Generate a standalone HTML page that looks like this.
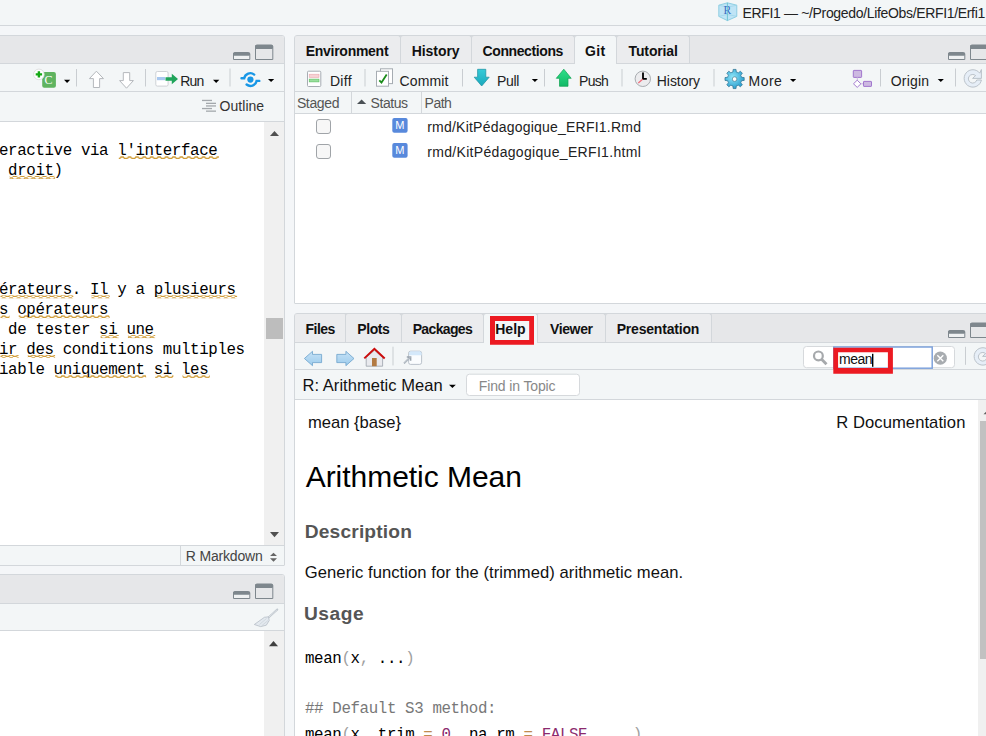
<!DOCTYPE html>
<html><head><meta charset="utf-8">
<style>
*{box-sizing:border-box}
html,body{margin:0;padding:0}
body{width:986px;height:736px;overflow:hidden;position:relative;background:#f4f6f8;font-family:'Liberation Sans',sans-serif}
.a{position:absolute}
.t{position:absolute;white-space:pre;line-height:1}
.bg-title{background:#f3f6f7}
.hdr{background:#e6e7e9}
.tb{background:#f3f6f7}
.ln{background:#d3d7db}
.tab{position:absolute;top:0;height:28px;background:#ebecee;border:1px solid #d3d7db;border-bottom:none;border-radius:3px 3px 0 0}
.tab.act{background:#f3f6f7}
.sep{position:absolute;width:1px;background:#c8ccd0}
.sbtn{position:absolute;width:20px;height:20px;background:#f0f0f0}
svg{position:absolute;overflow:visible}
</style></head><body>
<!-- title bar -->
<div class="a bg-title" style="left:0;top:0;width:986px;height:25px"></div>
<div class="a ln" style="left:0;top:25px;width:986px;height:1px"></div>

<!-- ============ LEFT SOURCE PANE ============ -->
<div class="a" style="left:-10px;top:35px;width:295px;height:531px;border:1px solid #d3d7db;border-radius:3px 3px 1px 1px;background:#fff;overflow:hidden">
  <div class="a hdr" style="left:0;top:0;width:293px;height:27px"></div>
  <div class="a ln" style="left:0;top:27px;width:293px;height:1px"></div>
  <div class="a tb" style="left:0;top:28px;width:293px;height:27px"></div>
  <div class="a ln" style="left:0;top:55px;width:293px;height:1px"></div>
  <div class="a tb" style="left:0;top:56px;width:293px;height:29px"></div>
  <div class="a ln" style="left:0;top:85px;width:293px;height:1px"></div>
  <!-- editor scrollbar -->
  <div class="a" style="left:273px;top:86px;width:20px;height:423px;background:#f0f0f0"></div>
  <div class="a" style="left:275px;top:282px;width:17px;height:21px;background:#bdbdbd"></div>
  <div class="a ln" style="left:0;top:509px;width:293px;height:1px"></div>
  <div class="a tb" style="left:0;top:510px;width:293px;height:19px"></div>
  <div class="a ln" style="left:189px;top:510px;width:1px;height:19px"></div>
</div>

<!-- ============ LEFT CONSOLE PANE ============ -->
<div class="a" style="left:-10px;top:574px;width:295px;height:180px;border:1px solid #d3d7db;border-radius:3px;background:#fff;overflow:hidden">
  <div class="a hdr" style="left:0;top:0;width:293px;height:28px"></div>
  <div class="a ln" style="left:0;top:28px;width:293px;height:1px"></div>
  <div class="a tb" style="left:0;top:29px;width:293px;height:26px"></div>
  <div class="a ln" style="left:0;top:55px;width:293px;height:1px"></div>
  <div class="a" style="left:273px;top:56px;width:20px;height:130px;background:#f0f0f0"></div>
</div>

<!-- ============ RIGHT GIT PANE ============ -->
<div class="a" style="left:294px;top:35px;width:702px;height:269px;border:1px solid #d3d7db;border-radius:3px 3px 1px 1px;background:#fff;overflow:hidden">
  <div class="a hdr" style="left:0;top:0;width:700px;height:27px"></div>
  <div class="tab" style="left:-1px;top:-1px;height:29px;width:107px"></div>
  <div class="tab" style="left:105px;top:-1px;height:29px;width:72px"></div>
  <div class="tab" style="left:176px;top:-1px;height:29px;width:104px"></div>
  <div class="tab" style="left:321px;top:-1px;height:29px;width:74px"></div>
  <div class="a ln" style="left:0;top:27px;width:700px;height:1px"></div>
  <div class="tab act" style="left:279px;top:-1px;height:29px;width:43px"></div>
  <div class="a tb" style="left:0;top:28px;width:700px;height:27px"></div>
  <div class="a ln" style="left:0;top:55px;width:700px;height:1px"></div>
  <div class="a tb" style="left:0;top:56px;width:700px;height:21px"></div>
  <div class="a ln" style="left:56px;top:56px;width:1px;height:21px"></div>
  <div class="a ln" style="left:126px;top:56px;width:1px;height:21px"></div>
  <div class="a ln" style="left:0;top:77px;width:700px;height:1px"></div>
</div>

<!-- ============ RIGHT HELP PANE ============ -->
<div class="a" style="left:294px;top:313px;width:702px;height:433px;border:1px solid #d3d7db;border-radius:3px;background:#fff;overflow:hidden">
  <div class="a hdr" style="left:0;top:0;width:700px;height:28px"></div>
  <div class="tab" style="left:-1px;top:-1px;height:29px;width:53px"></div>
  <div class="tab" style="left:50px;top:-1px;height:29px;width:57px"></div>
  <div class="tab" style="left:106px;top:-1px;height:29px;width:83px"></div>
  <div class="tab" style="left:241px;top:-1px;height:29px;width:70px"></div>
  <div class="tab" style="left:310px;top:-1px;height:29px;width:107px"></div>
  <div class="a ln" style="left:0;top:28px;width:700px;height:1px"></div>
  <div class="tab act" style="left:188px;top:-1px;height:30px;width:55px"></div>
  <div class="a tb" style="left:0;top:29px;width:700px;height:26px"></div>
  <div class="a ln" style="left:0;top:55px;width:700px;height:1px"></div>
  <div class="a tb" style="left:0;top:56px;width:700px;height:29px"></div>
  <div class="a ln" style="left:0;top:85px;width:700px;height:1px"></div>
  <div class="a" style="left:683px;top:86px;width:20px;height:350px;background:#f0f0f0"></div>
  <div class="a" style="left:685px;top:107px;width:20px;height:238px;background:#c1c1c1"></div>
</div>

<!-- ============ ICON OVERLAY ============ -->
<svg width="986" height="736" viewBox="0 0 986 736" style="left:0;top:0">
<defs>
 <linearGradient id="gBlueArr" x1="0" y1="0" x2="0" y2="1"><stop offset="0" stop-color="#c6e2f6"/><stop offset="1" stop-color="#9ccbec"/></linearGradient>
 <radialGradient id="gGear" cx="0.4" cy="0.4" r="0.7"><stop offset="0" stop-color="#8fe6f8"/><stop offset="1" stop-color="#1e94c8"/></radialGradient>
 <linearGradient id="gPull" x1="0" y1="0" x2="0" y2="1"><stop offset="0" stop-color="#34cbd8"/><stop offset="1" stop-color="#1aa8bc"/></linearGradient>
 <linearGradient id="gPush" x1="0" y1="0" x2="0" y2="1"><stop offset="0" stop-color="#2ee08a"/><stop offset="1" stop-color="#12b866"/></linearGradient>
 <pattern id="wavy" x="0" y="0" width="7.4" height="3" patternUnits="userSpaceOnUse">
   <path d="M-1,2.3 L1.6,2.3 L2.7,1.0 L4.9,1.0 L6.0,2.3 L8.4,2.3" fill="none" stroke="#cf9c38" stroke-width="1.3"/>
 </pattern>
</defs>

<!-- title R cube -->
<g>
 <path d="M718.8,5.2 L727.4,2.8 L736.8,5.2 V16.4 L727.4,20.6 L718.8,16.4 Z" fill="#bfe4f6" stroke="#86cbe0" stroke-width="0.9"/>
 <path d="M718.8,5.2 L727.4,7.2 L736.8,5.2 M718.8,16.4 L727.4,14.4 L736.8,16.4" fill="none" stroke="#9ad4e6" stroke-width="0.7"/>
 <text x="723.4" y="13.6" font-family="Liberation Serif" font-size="11.5" fill="#3a6cc2">R</text>
 <path d="M727.4,2.8 V20.6" stroke="#5dbccc" stroke-width="0.8"/>
</g>
<!-- ===== pane min/max icons ===== -->
<g id="minmaxL" fill="none">
 <path d="M233,60 V54 a1.5,1.5 0 0 1 1.5,-1.5 H248.3 a1.5,1.5 0 0 1 1.5,1.5 V60 Z" fill="#eff1f2" />
 <path d="M233.5,59.5 V54 a1.5,1.5 0 0 1 1.5,-1.5 H248.3 a1.5,1.5 0 0 1 1.5,1.5 V59.5 Z" stroke="#7e878d" stroke-width="1"/>
 <rect x="233" y="52.5" width="17" height="3.3" rx="1.2" fill="#7e878d"/>
 <path d="M255.5,59.5 V46.5 a1.5,1.5 0 0 1 1.5,-1.5 H271.3 a1.5,1.5 0 0 1 1.5,1.5 V59.5 Z" stroke="#7e878d" stroke-width="1"/>
 <rect x="255" y="45" width="18" height="4" rx="1.2" fill="#7e878d"/>
</g>
<use href="#minmaxL" transform="translate(0,539)"/>
<use href="#minmaxL" transform="translate(715,0)"/>
<use href="#minmaxL" transform="translate(715,278)"/>

<!-- ===== left editor toolbar ===== -->
<g>
 <rect x="42.2" y="72.1" width="13.7" height="15.7" rx="2" fill="#5fb35f"/>
 <text x="44.6" y="84.2" font-family="Liberation Serif" font-size="12" fill="#fff">C</text>
 <circle cx="38.9" cy="74.4" r="5.3" fill="#fff" stroke="#d8d8d8" stroke-width="0.8"/>
 <path d="M38.9,71.2 V77.6 M35.7,74.4 H42.1" stroke="#14a814" stroke-width="2.4"/>
 <path transform="translate(0,0.8)" d="M64,79 H70.2 L67.1,82.2 Z" fill="#000"/>
 <rect x="76" y="69" width="1" height="17.5" fill="#c9cdd1"/>
 <path d="M96.4,71.2 L103.5,78.6 H99.6 V87.5 H93.4 V78.6 H89.4 Z" fill="#fff" stroke="#b4b8bc" stroke-width="1"/>
 <path d="M123.3,72.6 H129.7 V80.6 H133.4 L126.5,88.2 L119.6,80.6 H123.3 Z" fill="#fff" stroke="#b4b8bc" stroke-width="1"/>
 <rect x="145" y="69" width="1" height="17.5" fill="#c9cdd1"/>
 <rect x="155.8" y="71.5" width="12.3" height="14.6" rx="1.5" fill="#fff" stroke="#c9cdd1" stroke-width="0.9"/>
 <rect x="157" y="77" width="8" height="3.2" fill="#a8c8f0"/>
 <path d="M165.5,77.3 H171.8 V73.8 L178,79 L171.8,84.2 V80.7 H165.5 Z" fill="#1fa45a"/>
 <path transform="translate(0,0.8)" d="M213,79 H219.3 L216.2,82.1 Z" fill="#000"/>
 <rect x="229.5" y="68.5" width="1" height="18" fill="#c9cdd1"/>
 <g fill="none" stroke="#1897e6" stroke-width="2.4" stroke-linecap="round">
  <path d="M241.5,78.2 H244.2 A6.2,6.2 0 0 1 254.2,74.6"/>
  <path d="M259.3,80.9 H256.6 A6.2,6.2 0 0 1 246.6,84.5"/>
 </g>
 <circle cx="250.4" cy="79.6" r="3.1" fill="#1897e6"/>
 <path transform="translate(0,0.8)" d="M268,78.2 H274.2 L271.1,81.3 Z" fill="#000"/>
</g>
<!-- outline icon -->
<g fill="#a4a8ac">
 <rect x="202" y="99.8" width="10" height="1.3"/>
 <rect x="206" y="102.7" width="10" height="1.3"/>
 <rect x="206" y="105.3" width="10" height="1.3"/>
 <rect x="202" y="107.9" width="10" height="1.3"/>
 <rect x="206" y="110.5" width="10" height="1.3"/>
</g>
<!-- editor scroll arrows -->
<path d="M270,136 L274.5,131 L279,136 Z" fill="#505050"/>
<path d="M270,532 H279 L274.5,537.3 Z" fill="#505050"/>
<!-- status bar up/down -->
<path d="M270,556 L273.5,552.8 L277,556 Z M270,558.3 H277 L273.5,561.7 Z" fill="#666"/>
<!-- console broom -->
<g>
 <path d="M277.3,609.5 L268.4,617.6" stroke="#b9c1c9" stroke-width="1.9" stroke-linecap="round"/>
 <path d="M277.3,609.5 L268.4,617.6" stroke="#eef1f4" stroke-width="0.7"/>
 <path d="M264.4,617.3 L268.5,616.8 L269.2,620.5 L266.3,625.2 L260.6,626.6 L254.3,624.5 Z" fill="#e3e9ef" stroke="#b6bec6" stroke-width="0.8"/>
 <path d="M266.5,618.5 L259.5,624.5 M268,620.5 L262,625.5" stroke="#c4ccd4" stroke-width="0.6"/>
</g>
<path d="M269,646.3 L273.5,641 L278,646.3 Z" fill="#404040"/>

<!-- ===== git toolbar ===== -->
<g>
 <rect x="307.5" y="71.2" width="13.3" height="15.3" rx="1" fill="#fff" stroke="#a6acb2" stroke-width="1"/>
 <rect x="309.2" y="74.2" width="9.8" height="3.2" fill="#f6d2d5" stroke="#eaa8ae" stroke-width="0.6"/>
 <rect x="309.2" y="79.1" width="9.8" height="2.8" fill="#9adf9e" stroke="#58bf5e" stroke-width="0.6"/>
 <rect x="364.5" y="69" width="1" height="17.5" fill="#c9cdd1"/>
 <rect x="380.5" y="68.8" width="12" height="14.8" fill="#fff" stroke="#a6acb2" stroke-width="1"/>
 <rect x="376.5" y="71.3" width="12" height="14.9" fill="#fff" stroke="#a6acb2" stroke-width="1"/>
 <path d="M379.3,80.3 L381.5,82.6 L386.7,74.5" fill="none" stroke="#1b8c1b" stroke-width="1.8"/>
 <rect x="462" y="69" width="1" height="17.5" fill="#c9cdd1"/>
 <path d="M477.6,69.3 H485.8 V77.2 H489.2 L481.7,86 L474.2,77.2 H477.6 Z" fill="url(#gPull)" stroke="#1b8fa0" stroke-width="0.7"/>
 <path transform="translate(0,0.8)" d="M531.8,78.3 H538 L534.9,81.3 Z" fill="#000"/>
 <rect x="544" y="69" width="1" height="17.5" fill="#c9cdd1"/>
 <path d="M563.8,69.2 L571.2,78.3 H568 V86.3 H559.5 V78.3 H556.3 Z" fill="url(#gPush)" stroke="#0fa050" stroke-width="0.7"/>
 <rect x="621.5" y="69" width="1" height="17.5" fill="#c9cdd1"/>
 <circle cx="642.8" cy="78.8" r="7.7" fill="#ececee" stroke="#a8acb0" stroke-width="1"/>
 <path d="M643,72.6 V78.9 H646.8" fill="none" stroke="#000" stroke-width="1.8"/>
 <path d="M642.6,79.2 L638.3,83" fill="none" stroke="#f06a78" stroke-width="1.2"/>
 <rect x="713.5" y="69" width="1" height="17.5" fill="#c9cdd1"/>
 <path id="gearp" d="M731.84,72.35 L732.92,72.00 L733.16,69.41 L736.04,69.41 L736.28,72.00 L737.36,72.35 L738.36,72.86 L740.36,71.20 L742.40,73.24 L740.74,75.24 L741.25,76.24 L741.60,77.32 L744.19,77.56 L744.19,80.44 L741.60,80.68 L741.25,81.76 L740.74,82.76 L742.40,84.76 L740.36,86.80 L738.36,85.14 L737.36,85.65 L736.28,86.00 L736.04,88.59 L733.16,88.59 L732.92,86.00 L731.84,85.65 L730.84,85.14 L728.84,86.80 L726.80,84.76 L728.46,82.76 L727.95,81.76 L727.60,80.68 L725.01,80.44 L725.01,77.56 L727.60,77.32 L727.95,76.24 L728.46,75.24 L726.80,73.24 L728.84,71.20 L730.84,72.86 Z" stroke-linejoin="round" fill="url(#gGear)" stroke="#2a6f8e" stroke-width="0.7"/>
 <circle cx="734.6" cy="79.1" r="2.3" fill="#fff" stroke="#3a6c80" stroke-width="0.6"/>
 <path transform="translate(0,0.8)" d="M790,78.3 H796.2 L793.1,81.3 Z" fill="#000"/>
 <rect x="853.3" y="70.4" width="8.3" height="7" rx="0.6" fill="#cdb9e1" stroke="#9a6ccb" stroke-width="0.9"/>
 <path d="M857.3,77.4 V80.2" stroke="#cdb9e1" stroke-width="1"/>
 <path d="M857.2,80.2 L860.9,83.8 L857.2,87.4 L853.5,83.8 Z" fill="#fff" stroke="#9a6ccb" stroke-width="0.9"/>
 <path d="M860.9,83.8 H863.4" stroke="#cdb9e1" stroke-width="1"/>
 <rect x="863.5" y="81.4" width="8" height="5" rx="0.5" fill="#cdb9e1" stroke="#9a6ccb" stroke-width="0.9"/>
 <rect x="880" y="69" width="1" height="17.5" fill="#c9cdd1"/>
 <path transform="translate(0,0.8)" d="M937.7,78.3 H943.9 L940.8,81.3 Z" fill="#000"/>
 <rect x="955" y="68.5" width="1" height="18" fill="#c9cdd1"/>
 <path d="M979.8,73.2 A8.7,8.7 0 1 0 981.4,80 H976.8 A4.3,4.3 0 1 1 975.6,75.6 L972.6,78.4 H981.4 V69.5 L979.8,73.2 Z" fill="#e6eef7" stroke="#b4bcc4" stroke-width="0.9"/>
</g>
<!-- git header sort triangle -->
<path d="M357,104 L361.6,99.6 L366.2,104 Z" fill="#4a5055"/>
<!-- checkboxes & M badges -->
<g>
 <rect x="316.5" y="119.5" width="14" height="14" rx="2.5" fill="#f7f7f7" stroke="#a0a4a8" stroke-width="1"/>
 <rect x="316.5" y="144.5" width="14" height="14" rx="2.5" fill="#f7f7f7" stroke="#a0a4a8" stroke-width="1"/>
 <rect x="392.3" y="118" width="15.3" height="14.8" rx="2" fill="#5889dc"/>
 <rect x="392.3" y="143" width="15.3" height="14.8" rx="2" fill="#5889dc"/>
 <text x="395.3" y="129" font-family="Liberation Sans" font-size="11" font-weight="400" textLength="9.2" lengthAdjust="spacingAndGlyphs" fill="#fff">M</text>
 <text x="395.3" y="154" font-family="Liberation Sans" font-size="11" font-weight="400" textLength="9.2" lengthAdjust="spacingAndGlyphs" fill="#fff">M</text>
</g>

<!-- ===== help toolbar ===== -->
<g>
 <path d="M304.4,358.5 L312.5,351.3 V354.4 H321.6 V362.6 H312.5 V365.7 Z" fill="url(#gBlueArr)" stroke="#6ca2cc" stroke-width="0.8"/>
 <path d="M354,358.5 L345.9,351.3 V354.4 H336.8 V362.6 H345.9 V365.7 Z" fill="url(#gBlueArr)" stroke="#6ca2cc" stroke-width="0.8"/>
 <path d="M366.2,357.5 L374.4,350.3 L382.6,357.5 V366.2 H366.2 Z" fill="#e9eaee" stroke="#9aa2aa" stroke-width="0.8"/>
 <rect x="372" y="358" width="4.7" height="8.2" fill="#b27a42"/>
 <path d="M364.3,358.4 L374.4,348.8 L384.7,358.4" fill="none" stroke="#cc0c0c" stroke-width="2"/>
 <rect x="392.5" y="346.7" width="1" height="18.7" fill="#c9cdd1"/>
 <rect x="408.6" y="351.2" width="13" height="13.2" rx="2" fill="#fafcfe" stroke="#aab4be" stroke-width="0.8"/>
 <path d="M409,355.3 V353.2 a2,2 0 0 1 2,-2 H419.6 a2,2 0 0 1 2,2 V355.3 Z" fill="#d4e8fa"/>
 <path d="M404,363.4 L410,357.4 M406.8,357 H410.6 V360.8" fill="none" stroke="#9aa4ae" stroke-width="1.6"/>
 <path d="M404,363.4 L410,357.4" fill="none" stroke="#eef2f6" stroke-width="0.6"/>
</g>
<!-- search box -->
<rect x="803.5" y="346.5" width="151" height="21.2" rx="3" fill="#fff" stroke="#d6d9dc" stroke-width="1"/>
<g fill="none" stroke="#a6a9ac">
 <circle cx="818.4" cy="355.9" r="4.4" stroke-width="2.2"/>
 <path d="M821.6,359.2 L826.5,364.3" stroke-width="2.8"/>
</g>
<rect x="833.8" y="347" width="98.4" height="21.2" fill="#fff" stroke="#7ea2dc" stroke-width="1.5"/>
<circle cx="940.3" cy="358.2" r="6.6" fill="#a8acb0"/>
<path d="M937.3,355.2 L943.3,361.2 M943.3,355.2 L937.3,361.2" stroke="#fff" stroke-width="1.4"/>
<rect x="965" y="346.8" width="1" height="18" fill="#c9cdd1"/>
<path transform="translate(10,0)" d="M979.8,351.2 A8.7,8.7 0 1 0 981.4,358 H976.8 A4.3,4.3 0 1 1 975.6,353.6 L972.6,356.4 H981.4 V347.5 L979.8,351.2 Z" fill="#e6eef7" stroke="#b4bcc4" stroke-width="0.9"/>
<rect x="872" y="353.8" width="1.4" height="13" fill="#000"/>
<!-- help title bar -->
<path d="M449,384.8 H455.8 L452.4,388 Z" fill="#000"/>
<rect x="466.5" y="374.2" width="113" height="21.3" rx="3" fill="#fff" stroke="#d6d9dc" stroke-width="1"/>
<!-- help scrollbar up arrow partial -->
<path d="M983.5,414.3 L988.5,409.3 L993.5,414.3 Z" fill="#606060"/>

<!-- red highlight rectangles -->
<path fill-rule="evenodd" fill="#ec1a22" d="M490,316 H534 V344.8 H490 Z M495,321 V340 H529.2 V321 Z"/>
<path fill-rule="evenodd" fill="#ec1a22" d="M833.3,347.8 H892.9 V373.8 H833.3 Z M838.1,352.2 V367.9 H887.9 V352.2 Z"/>
<rect x="118.80" y="156.00" width="100.10" height="3" fill="url(#wavy)"/><rect x="9.60" y="175.90" width="45.50" height="3" fill="url(#wavy)"/><rect x="0.50" y="295.30" width="72.80" height="3" fill="url(#wavy)"/><rect x="91.50" y="295.30" width="18.20" height="3" fill="url(#wavy)"/><rect x="155.20" y="295.30" width="81.90" height="3" fill="url(#wavy)"/><rect x="0.50" y="315.20" width="9.10" height="3" fill="url(#wavy)"/><rect x="18.70" y="315.20" width="91.00" height="3" fill="url(#wavy)"/><rect x="100.60" y="335.10" width="18.20" height="3" fill="url(#wavy)"/><rect x="127.90" y="335.10" width="27.30" height="3" fill="url(#wavy)"/><rect x="0.50" y="355.00" width="18.20" height="3" fill="url(#wavy)"/><rect x="27.80" y="355.00" width="27.30" height="3" fill="url(#wavy)"/><rect x="55.10" y="374.90" width="91.00" height="3" fill="url(#wavy)"/><rect x="155.20" y="374.90" width="18.20" height="3" fill="url(#wavy)"/><rect x="182.50" y="374.90" width="27.30" height="3" fill="url(#wavy)"/>
</svg>

<div class="t" style="left:742.40px;top:5.95px;font-family:'Liberation Sans', sans-serif;font-size:14px;color:#222;letter-spacing:-0.333px;">ERFI1 — ~/Progedo/LifeObs/ERFI1/Erfi1</div>
<div class="t" style="left:180.20px;top:74.05px;font-family:'Liberation Sans', sans-serif;font-size:14px;color:#222;letter-spacing:-0.750px;">Run</div>
<div class="t" style="left:219.60px;top:99.15px;font-family:'Liberation Sans', sans-serif;font-size:14px;color:#333;letter-spacing:0.033px;">Outline</div>
<div class="t" style="left:185.70px;top:549.25px;font-family:'Liberation Sans', sans-serif;font-size:14px;color:#444;letter-spacing:-0.156px;">R Markdown</div>
<div class="t" style="left:305.70px;top:44.15px;font-family:'Liberation Sans', sans-serif;font-size:14px;color:#111;font-weight:700;letter-spacing:-0.270px;">Environment</div>
<div class="t" style="left:411.70px;top:44.15px;font-family:'Liberation Sans', sans-serif;font-size:14px;color:#111;font-weight:700;letter-spacing:-0.050px;">History</div>
<div class="t" style="left:482.50px;top:44.15px;font-family:'Liberation Sans', sans-serif;font-size:14px;color:#111;font-weight:700;letter-spacing:-0.390px;">Connections</div>
<div class="t" style="left:585.00px;top:44.15px;font-family:'Liberation Sans', sans-serif;font-size:14px;color:#111;font-weight:700;letter-spacing:0.400px;">Git</div>
<div class="t" style="left:628.60px;top:44.15px;font-family:'Liberation Sans', sans-serif;font-size:14px;color:#111;font-weight:700;letter-spacing:-0.143px;">Tutorial</div>
<div class="t" style="left:329.90px;top:73.95px;font-family:'Liberation Sans', sans-serif;font-size:14px;color:#222;letter-spacing:0.367px;">Diff</div>
<div class="t" style="left:399.40px;top:73.95px;font-family:'Liberation Sans', sans-serif;font-size:14px;color:#222;letter-spacing:0.180px;">Commit</div>
<div class="t" style="left:497.00px;top:73.95px;font-family:'Liberation Sans', sans-serif;font-size:14px;color:#222;letter-spacing:-0.333px;">Pull</div>
<div class="t" style="left:579.00px;top:73.95px;font-family:'Liberation Sans', sans-serif;font-size:14px;color:#222;letter-spacing:-0.667px;">Push</div>
<div class="t" style="left:656.80px;top:73.95px;font-family:'Liberation Sans', sans-serif;font-size:14px;color:#222;letter-spacing:-0.050px;">History</div>
<div class="t" style="left:748.50px;top:73.95px;font-family:'Liberation Sans', sans-serif;font-size:14px;color:#222;letter-spacing:0.500px;">More</div>
<div class="t" style="left:890.80px;top:73.95px;font-family:'Liberation Sans', sans-serif;font-size:14px;color:#222;letter-spacing:0.180px;">Origin</div>
<div class="t" style="left:296.90px;top:96.35px;font-family:'Liberation Sans', sans-serif;font-size:14px;color:#555;letter-spacing:-0.360px;">Staged</div>
<div class="t" style="left:370.60px;top:96.35px;font-family:'Liberation Sans', sans-serif;font-size:14px;color:#555;letter-spacing:-0.460px;">Status</div>
<div class="t" style="left:424.60px;top:96.35px;font-family:'Liberation Sans', sans-serif;font-size:14px;color:#555;letter-spacing:-0.500px;">Path</div>
<div class="t" style="left:427.20px;top:120.15px;font-family:'Liberation Sans', sans-serif;font-size:14px;color:#222;letter-spacing:0.222px;">rmd/KitPédagogique_ERFI1.Rmd</div>
<div class="t" style="left:427.20px;top:145.15px;font-family:'Liberation Sans', sans-serif;font-size:14px;color:#222;letter-spacing:0.321px;">rmd/KitPédagogique_ERFI1.html</div>
<div class="t" style="left:305.50px;top:321.95px;font-family:'Liberation Sans', sans-serif;font-size:14px;color:#111;font-weight:700;letter-spacing:-0.500px;">Files</div>
<div class="t" style="left:357.30px;top:321.95px;font-family:'Liberation Sans', sans-serif;font-size:14px;color:#111;font-weight:700;letter-spacing:-0.425px;">Plots</div>
<div class="t" style="left:412.70px;top:321.95px;font-family:'Liberation Sans', sans-serif;font-size:14px;color:#111;font-weight:700;letter-spacing:-0.657px;">Packages</div>
<div class="t" style="left:495.20px;top:321.95px;font-family:'Liberation Sans', sans-serif;font-size:14px;color:#111;font-weight:700;letter-spacing:0.033px;">Help</div>
<div class="t" style="left:550.00px;top:321.95px;font-family:'Liberation Sans', sans-serif;font-size:14px;color:#111;font-weight:700;letter-spacing:-0.380px;">Viewer</div>
<div class="t" style="left:616.70px;top:321.95px;font-family:'Liberation Sans', sans-serif;font-size:14px;color:#111;font-weight:700;letter-spacing:-0.200px;">Presentation</div>
<div class="t" style="left:302.50px;top:377.03px;font-family:'Liberation Sans', sans-serif;font-size:16.5px;color:#111;letter-spacing:0.047px;">R: Arithmetic Mean</div>
<div class="t" style="left:478.80px;top:378.55px;font-family:'Liberation Sans', sans-serif;font-size:14px;color:#888;letter-spacing:-0.133px;">Find in Topic</div>
<div class="t" style="left:839.00px;top:352.15px;font-family:'Liberation Sans', sans-serif;font-size:14px;color:#111;letter-spacing:-0.500px;">mean</div>
<div class="t" style="left:307.90px;top:414.95px;font-family:'Liberation Sans', sans-serif;font-size:16.6px;color:#111;">mean {base}</div>
<div class="t" style="left:836.20px;top:414.55px;font-family:'Liberation Sans', sans-serif;font-size:16.6px;color:#111;letter-spacing:0.071px;">R Documentation</div>
<div class="t" style="left:305.70px;top:462.11px;font-family:'Liberation Sans', sans-serif;font-size:30px;color:#000;letter-spacing:-0.036px;">Arithmetic Mean</div>
<div class="t" style="left:304.80px;top:522.05px;font-family:'Liberation Sans', sans-serif;font-size:19.2px;color:#555;font-weight:700;letter-spacing:0.150px;">Description</div>
<div class="t" style="left:304.80px;top:564.95px;font-family:'Liberation Sans', sans-serif;font-size:16.6px;color:#111;letter-spacing:0.060px;">Generic function for the (trimmed) arithmetic mean.</div>
<div class="t" style="left:304.00px;top:603.75px;font-family:'Liberation Sans', sans-serif;font-size:19.2px;color:#555;font-weight:700;letter-spacing:0.500px;">Usage</div>
<div class="t" style="left:-1.00px;top:143.89px;font-family:'Liberation Mono', monospace;font-size:15.8px;color:#000;letter-spacing:-0.380px;">eractive via l'interface</div>
<div class="t" style="left:-1.00px;top:163.79px;font-family:'Liberation Mono', monospace;font-size:15.8px;color:#000;letter-spacing:-0.380px;"> droit)</div>
<div class="t" style="left:-1.00px;top:283.19px;font-family:'Liberation Mono', monospace;font-size:15.8px;color:#000;letter-spacing:-0.380px;">érateurs. Il y a plusieurs</div>
<div class="t" style="left:-1.00px;top:303.09px;font-family:'Liberation Mono', monospace;font-size:15.8px;color:#000;letter-spacing:-0.380px;">s opérateurs</div>
<div class="t" style="left:-1.00px;top:322.99px;font-family:'Liberation Mono', monospace;font-size:15.8px;color:#000;letter-spacing:-0.380px;"> de tester si une</div>
<div class="t" style="left:-1.00px;top:342.89px;font-family:'Liberation Mono', monospace;font-size:15.8px;color:#000;letter-spacing:-0.380px;">ir des conditions multiples</div>
<div class="t" style="left:-1.00px;top:362.79px;font-family:'Liberation Mono', monospace;font-size:15.8px;color:#000;letter-spacing:-0.380px;">iable uniquement si les</div>
<div class="t" style="left:305.00px;top:651.89px;font-family:'Liberation Mono', monospace;font-size:15.8px;color:#000;letter-spacing:-0.380px;">mean<span style="color:#a0a0a0">(</span>x<span style="color:#a0a0a0">,</span> ...<span style="color:#a0a0a0">)</span></div>
<div class="t" style="left:305.00px;top:701.69px;font-family:'Liberation Mono', monospace;font-size:15.8px;color:#787878;letter-spacing:-0.380px;">## Default S3 method:</div>
<div class="t" style="left:305.00px;top:727.89px;font-family:'Liberation Mono', monospace;font-size:15.8px;color:#000;letter-spacing:-0.380px;">mean<span style="color:#a0a0a0">(</span>x<span style="color:#a0a0a0">,</span> trim <span style="color:#c08a50">=</span> <span style="color:#8b2a6e">0</span><span style="color:#a0a0a0">,</span> na.rm <span style="color:#c08a50">=</span> <span style="color:#8b2a6e">FALSE</span><span style="color:#a0a0a0">,</span> ...<span style="color:#a0a0a0">)</span></div>
</body></html>
